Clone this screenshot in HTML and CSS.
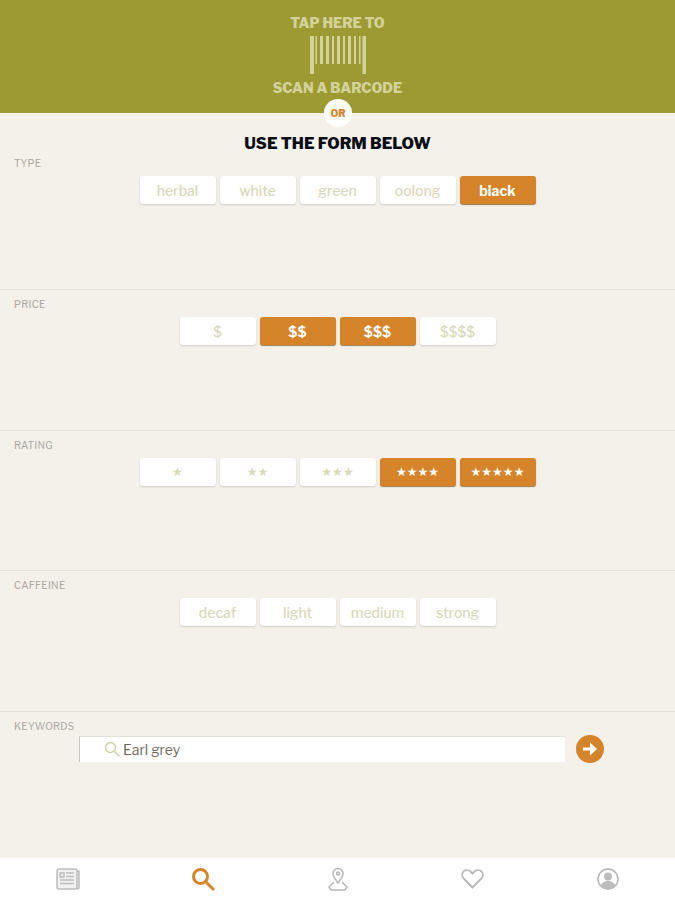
FILE: index.html
```html
<!DOCTYPE html>
<html lang="en">
    <head>
        <title>Find a tea</title>
        <meta charset="UTF-8">
        <meta name="viewport" content="width=device-width, initial-scale=1">
        <link rel="stylesheet" href="styles.css">
    </head>

    <body>
        <header class="scan">
            <p class="scan-text">TAP HERE TO</p>
            <svg class="barcode" width="58" height="38" viewBox="0 0 58 38">
                <path d="M1 0h4v38h-4zM6.500 0h1.500v28h-1.500zM11 0h3v28h-3zM17 0h3v28h-3zM23 0h2v28h-2zM28 0h3v28h-3zM34 0h2v28h-2zM39 0h3v28h-3zM45 0h2v28h-2zM50 0h1.500v28h-1.500zM53.500 0h3.500v38h-3.500z"/>
            </svg>
            <p class="scan-text">SCAN A BARCODE</p>
            <span class="or-badge">OR</span>
        </header>

        <main class="form">
            <section class="group group-first">
                <h1 class="form-title">USE THE FORM BELOW</h1>
                <h2 class="group-label">TYPE</h2>
                <div class="options">
                    <button class="option">herbal</button>
                    <button class="option">white</button>
                    <button class="option">green</button>
                    <button class="option">oolong</button>
                    <button class="option selected">black</button>
                </div>
            </section>

            <section class="group">
                <h2 class="group-label">PRICE</h2>
                <div class="options">
                    <button class="option">$</button>
                    <button class="option selected">$$</button>
                    <button class="option selected">$$$</button>
                    <button class="option">$$$$</button>
                </div>
            </section>

            <section class="group">
                <h2 class="group-label">RATING</h2>
                <div class="options">
                    <button class="option stars">★</button>
                    <button class="option stars">★★</button>
                    <button class="option stars">★★★</button>
                    <button class="option stars selected">★★★★</button>
                    <button class="option stars selected">★★★★★</button>
                </div>
            </section>

            <section class="group">
                <h2 class="group-label">CAFFEINE</h2>
                <div class="options">
                    <button class="option">decaf</button>
                    <button class="option">light</button>
                    <button class="option">medium</button>
                    <button class="option">strong</button>
                </div>
            </section>

            <section class="group group-last">
                <h2 class="group-label">KEYWORDS</h2>
                <div class="search-row">
                    <div class="search-box">
                        <svg class="search-icon" width="17" height="17" viewBox="0 0 17 17">
                            <circle cx="6.500" cy="6.500" r="5"/>
                            <path d="M10.500 10.500l5 5"/>
                        </svg>
                        <span class="search-text">Earl grey</span>
                    </div>
                    <button class="go">
                        <svg width="16" height="14" viewBox="0 0 16 14">
                            <path d="M1 5.500h7v-5l7 6.500-7 6.500v-5h-7z"/>
                        </svg>
                    </button>
                </div>
            </section>
        </main>

        <nav class="tabs">
            <div class="tab">
                <svg width="24" height="22" viewBox="0 0 24 22" fill="#f1f1f1" stroke="#bdbdbd" stroke-width="1.500">
                    <path d="M21 3h2v16a2 2 0 0 1-2 2"/>
                    <rect x="1" y="1" width="20" height="20" rx="2"/>
                    <path d="M4 5h4v4h-4zM10 5h8M10 8.500h8M4 12h14M4 15.500h14"/>
                </svg>
            </div>
            <div class="tab">
                <svg width="24" height="24" viewBox="0 0 24 24" fill="none" stroke="#d5842a" stroke-width="3">
                    <circle cx="9.500" cy="9.500" r="7"/>
                    <path d="M14.500 14.500l7.500 7.500" stroke-linecap="round"/>
                </svg>
            </div>
            <div class="tab">
                <svg width="20" height="24" viewBox="0 0 20 24" fill="none" stroke="#b5b5b5" stroke-width="1.500">
                    <path d="M10 16c-3-4-5-6.500-5-9.500a5 5 0 0 1 10 0c0 3-2 5.500-5 9.500z"/>
                    <circle cx="10" cy="6.500" r="1.500"/>
                    <path d="M6 15l-5 5 2 3h14l2-3-5-5"/>
                </svg>
            </div>
            <div class="tab">
                <svg width="23" height="20" viewBox="0 0 23 20" fill="none" stroke="#b5b5b5" stroke-width="1.800">
                    <path d="M11.500 18.500l-9-9a5.200 5.200 0 0 1 0-7 5.200 5.200 0 0 1 7 0l2 2 2-2a5.200 5.200 0 0 1 7 0 5.200 5.200 0 0 1 0 7z"/>
                </svg>
            </div>
            <div class="tab">
                <svg width="22" height="22" viewBox="0 0 22 22">
                    <circle cx="11" cy="11" r="10" fill="#fff" stroke="#b5b5b5" stroke-width="1.500"/>
                    <circle cx="11" cy="8.500" r="4" fill="#bdbdbd"/>
                    <path d="M3.500 18c1-3.500 4-5 7.500-5s6.500 1.500 7.500 5a10 10 0 0 1-15 0z" fill="#bdbdbd"/>
                </svg>
            </div>
        </nav>
    </body>
</html>
```

FILE: styles.css
```css
* {
    box-sizing: border-box;
}
html, body {
    height: 100%;
}
body {
    display: flex;
    flex-direction: column;
    height: 900px;
    margin: 0;
    overflow: hidden;
    font-family: "Libre Franklin", Inter, "Liberation Sans", sans-serif;
    background-color: #f3f1e9;
}
p, h1, h2 {
    margin: 0;
}

.scan {
    position: relative;
    display: flex;
    flex-direction: column;
    align-items: center;
    flex: none;
    height: 113px;
    padding-top: 14px;
    background-color: #9d9a33;
}
.scan-text {
    height: 18px;
    font-size: 14px;
    font-weight: 800;
    line-height: 18px;
    color: #d3d29b;
}
.barcode {
    flex: none;
    margin-top: 4px;
    margin-bottom: 5px;
    fill: #d3d29b;
}
.or-badge {
    position: absolute;
    left: 324px;
    bottom: -14px;
    width: 28px;
    height: 28px;
    font-size: 10px;
    font-weight: 800;
    line-height: 28px;
    text-align: center;
    color: #d5842a;
    background-color: #fff;
    border-radius: 50%;
}

.form {
    flex: 1;
    display: flex;
    flex-direction: column;
}
.group {
    flex: none;
    height: 140.500px;
    padding-top: 7px;
    border-top: 1px solid #e2e0d8;
}
.group-first {
    position: relative;
    height: 176px;
    padding-top: 43px;
    border-top: 0;
}
.group-last {
    height: 147px;
}
.form-title {
    position: absolute;
    top: 21px;
    left: 0;
    width: 100%;
    font-size: 16px;
    font-weight: 800;
    line-height: 20px;
    text-align: center;
    color: #0b0d17;
}
.group-label {
    height: 14px;
    margin-left: 14px;
    font-size: 10px;
    font-weight: 400;
    line-height: 14px;
    letter-spacing: 0.3px;
    color: #a9a79f;
}

.options {
    display: flex;
    justify-content: center;
    gap: 4px;
    margin-top: 6px;
}
.option {
    width: 76px;
    height: 28px;
    padding: 0;
    font-family: inherit;
    font-size: 14px;
    font-weight: 500;
    color: #d8d9b8;
    background-color: #fff;
    border: 0;
    border-radius: 3px;
    box-shadow: 0 1px 2px rgba(0, 0, 0, 0.15);
}
.stars {
    font-family: "DejaVu Sans", sans-serif;
    font-size: 12px;
}
.selected {
    font-weight: 700;
    color: #fff;
    background-color: #d5842a;
    box-shadow: 0 1px 1px rgba(120, 70, 10, 0.7);
}

.search-row {
    display: flex;
    align-items: center;
    gap: 11px;
    margin-top: 2px;
    padding-left: 79px;
}
.search-box {
    display: flex;
    align-items: center;
    gap: 2px;
    width: 486px;
    height: 26px;
    padding-left: 24px;
    background-color: #fff;
    border-left: 1px solid #c9c7bd;
    border-top: 1px solid #e2e0d8;
}
.search-icon {
    fill: none;
    stroke: #cfd0a8;
    stroke-width: 1.500;
}
.search-text {
    font-size: 14px;
    color: #6c675a;
}
.go {
    display: flex;
    align-items: center;
    justify-content: center;
    width: 28px;
    height: 28px;
    padding: 0;
    background-color: #d5842a;
    border: 0;
    border-radius: 50%;
}
.go svg {
    fill: #fff;
}

.tabs {
    display: grid;
    grid-template-columns: repeat(5, 1fr);
    flex: none;
    height: 42px;
    background-color: #fff;
}
.tab {
    display: flex;
    align-items: center;
    justify-content: center;
}
```
